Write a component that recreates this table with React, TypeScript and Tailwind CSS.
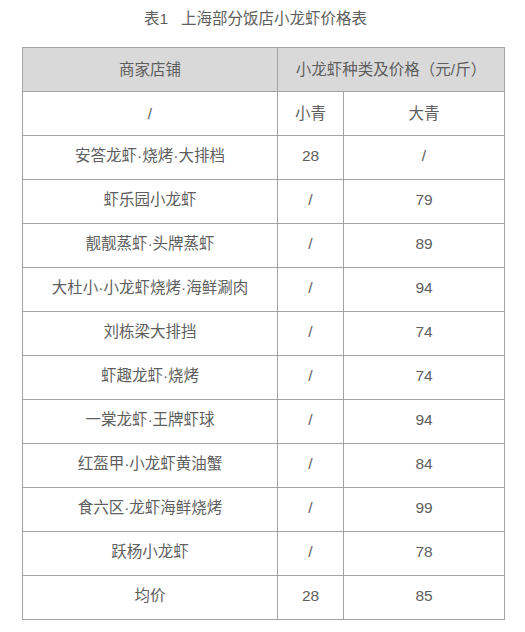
const rows: [string, string, string][] = [
  ["安答龙虾·烧烤·大排档", "28", "/"],
  ["虾乐园小龙虾", "/", "79"],
  ["靓靓蒸虾·头牌蒸虾", "/", "89"],
  ["大杜小·小龙虾烧烤·海鲜涮肉", "/", "94"],
  ["刘栋梁大排挡", "/", "74"],
  ["虾趣龙虾·烧烤", "/", "74"],
  ["一棠龙虾·王牌虾球", "/", "94"],
  ["红盔甲·小龙虾黄油蟹", "/", "84"],
  ["食六区·龙虾海鲜烧烤", "/", "99"],
  ["跃杨小龙虾", "/", "78"],
  ["均价", "28", "85"],
];

export default function App() {
  return (
    <div
      className="w-[525px] h-[632px] bg-white text-[#5e5e5e] pt-[7px]"
      style={{ fontFamily: '"Liberation Sans", "Noto Sans CJK SC", sans-serif' }}
    >
      <h1 className="text-center text-[15.5px] leading-[24px] pr-[14px] mb-[16px] font-normal">
        表1&nbsp;&nbsp;&nbsp;上海部分饭店小龙虾价格表
      </h1>
      <table className="ml-[22px] w-[483px] border-collapse table-fixed text-[15.5px]">
        <colgroup>
          <col className="w-[255px]" />
          <col className="w-[66px]" />
          <col />
        </colgroup>
        <tbody>
          <tr className="h-[44px] bg-[#d9d9d9]">
            <td className="border border-[#a3a3a3] text-center">商家店铺</td>
            <td colSpan={2} className="border border-[#a3a3a3] text-center">
              小龙虾种类及价格（元/斤）
            </td>
          </tr>
          <tr className="h-[44px]">
            <td className="border border-[#a3a3a3] text-center">/</td>
            <td className="border border-[#a3a3a3] text-center">小青</td>
            <td className="border border-[#a3a3a3] text-center">大青</td>
          </tr>
          {rows.map((r, i) => (
            <tr key={i} className="h-[44px]">
              <td className="border border-[#a3a3a3] text-center pb-[4px]">{r[0]}</td>
              <td className="border border-[#a3a3a3] text-center pb-[4px]">{r[1]}</td>
              <td className="border border-[#a3a3a3] text-center pb-[4px]">{r[2]}</td>
            </tr>
          ))}
        </tbody>
      </table>
    </div>
  );
}
